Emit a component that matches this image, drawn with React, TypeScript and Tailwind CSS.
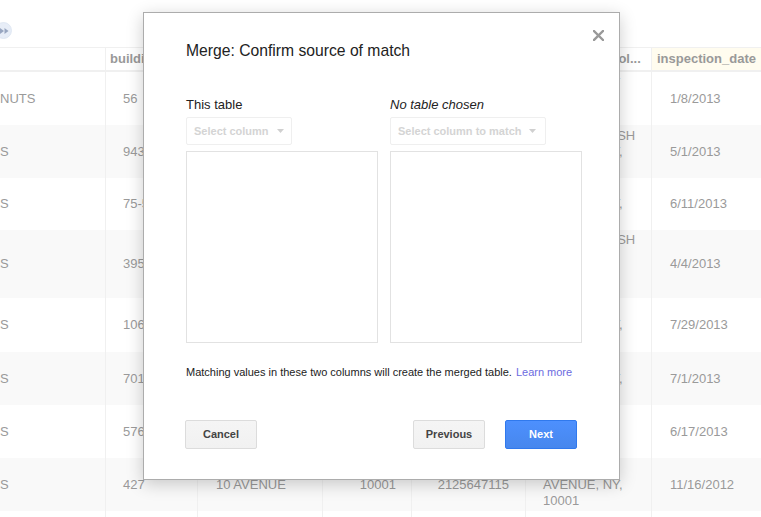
import React from 'react';

type Row = {
  h: string;
  bg: string;
  c0: string;
  c1: string;
  c2: string;
  c3: string;
  c4: string;
  c5: string[];
  d: string;
};

const rows: Row[] = [
  { h: 'h-[53px]', bg: 'bg-white', c0: 'NUTS', c1: '56', c2: '1 BROAD ST', c3: '10004', c4: '2125550101', c5: ['1 BROAD ST', 'STREET, NY,', '10004'], d: '1/8/2013' },
  { h: 'h-[53px]', bg: 'bg-[#f9f9f9]', c0: 'S', c1: '943', c2: 'FLATBUSH', c3: '11226', c4: '7185550102', c5: ['123 FLATBUSH', 'AVENUE, NY,', '11226'], d: '5/1/2013' },
  { h: 'h-[52px]', bg: 'bg-white', c0: 'S', c1: '75-55', c2: '31 AVENUE', c3: '11370', c4: '7185550103', c5: ['75-55 31ST', 'AVENUE, NY,', '11370'], d: '6/11/2013' },
  { h: 'h-[68px]', bg: 'bg-[#f9f9f9]', c0: 'S', c1: '395', c2: 'FLATBUSH', c3: '11238', c4: '7185550104', c5: ['123 FLATBUSH', 'AVE', 'STREET, NY,', '11238'], d: '4/4/2013' },
  { h: 'h-[54px]', bg: 'bg-white', c0: 'S', c1: '106', c2: 'W 32 ST', c3: '10001', c4: '2125550105', c5: ['106 W 32ND', 'AVENUE, NY,', '10001'], d: '7/29/2013' },
  { h: 'h-[53px]', bg: 'bg-[#f9f9f9]', c0: 'S', c1: '701', c2: '7 AVENUE', c3: '10036', c4: '2125550106', c5: ['701 7TH', 'AVENUE, NY,', '10036'], d: '7/1/2013' },
  { h: 'h-[53px]', bg: 'bg-white', c0: 'S', c1: '576', c2: '5 AVENUE', c3: '10036', c4: '2125550107', c5: ['576 5TH', 'STREET, NY,', '10036'], d: '6/17/2013' },
  { h: 'h-[53px]', bg: 'bg-[#f9f9f9]', c0: 'S', c1: '427', c2: '10 AVENUE', c3: '10001', c4: '2125647115', c5: ['427 10', 'AVENUE, NY,', '10001'], d: '11/16/2012' },
];

const grid = 'grid grid-cols-[105px_92px_125px_89px_114px_126px_1fr]';
const cellB = 'border-l border-[#f0f0f0]';

function Arrow() {
  return (
    <svg width="7" height="4" viewBox="0 0 7 4" className="shrink-0">
      <path d="M0 0 L7 0 L3.5 4 Z" fill="#d0d0d0" />
    </svg>
  );
}

export default function App() {
  return (
    <div className="relative w-[761px] h-[517px] overflow-hidden bg-white font-['Liberation_Sans',Arial,sans-serif]">
      {/* top bar */}
      <div className="h-[47px] pt-[22px]">
        <svg width="14" height="17" viewBox="0 0 14 17">
          <circle cx="3.5" cy="8.5" r="8" fill="#e7edf7" stroke="#dbe3f0" strokeWidth="0.8" />
          <path d="M0 6 L4 9 L0 12 Z" fill="#98a6c0" />
          <path d="M4.5 6 L8.5 9 L4.5 12 Z" fill="#98a6c0" />
        </svg>
      </div>

      {/* table header */}
      <div className={`${grid} border-t border-b-2 border-[#f0f0f0] h-[25px] text-[13px] font-bold text-[#999]`}>
        <div className="flex items-center pl-[4px]"></div>
        <div className={`${cellB} flex items-center pl-[4px] overflow-hidden whitespace-nowrap`}>building</div>
        <div className={`${cellB} flex items-center pl-[5px] overflow-hidden whitespace-nowrap`}>street</div>
        <div className={`${cellB} flex items-center pl-[5px] overflow-hidden whitespace-nowrap`}>zipcode</div>
        <div className={`${cellB} flex items-center pl-[5px] overflow-hidden whitespace-nowrap`}>phone</div>
        <div className={`${cellB} flex items-center pl-[5px] overflow-hidden whitespace-nowrap`}>address_geo_ol...</div>
        <div className={`${cellB} flex items-center pl-[5px] bg-[#fffcef] whitespace-nowrap`}>inspection_date</div>
      </div>

      {/* table rows */}
      {rows.map((r, i) => (
        <div key={i} className={`${grid} ${r.h} ${r.bg} text-[13px] leading-[16px] text-[#9a9a9a]`}>
          <div className="flex items-center overflow-hidden whitespace-nowrap">{r.c0}</div>
          <div className={`${cellB} flex items-center pl-[17px] overflow-hidden whitespace-nowrap`}>{r.c1}</div>
          <div className={`${cellB} flex items-center pl-[18px] overflow-hidden whitespace-nowrap`}>{r.c2}</div>
          <div className={`${cellB} flex items-center justify-end pr-[15px] overflow-hidden whitespace-nowrap`}>{r.c3}</div>
          <div className={`${cellB} flex items-center justify-end pr-[16px] overflow-hidden whitespace-nowrap`}>{r.c4}</div>
          <div className={`${cellB} flex flex-col justify-center pl-[17px] overflow-hidden whitespace-nowrap`}>
            {r.c5.map((l, j) => (
              <div key={j}>{l}</div>
            ))}
          </div>
          <div className={`${cellB} flex items-center pl-[18px] whitespace-nowrap`}>{r.d}</div>
        </div>
      ))}
      <div className={`${grid} h-[20px] bg-white`}>
        <div></div>
        <div className={cellB}></div>
        <div className={cellB}></div>
        <div className={cellB}></div>
        <div className={cellB}></div>
        <div className={cellB}></div>
        <div className={cellB}></div>
      </div>

      {/* dialog */}
      <div className="absolute left-[143px] top-[12px] w-[477px] h-[468px] bg-white border border-[#acacac] shadow-[0_4px_16px_rgba(0,0,0,0.2)] pl-[42px] pt-[28px]">
        <div className="absolute right-[15px] top-[17px] w-[11px] h-[11px]">
          <svg width="11" height="11" viewBox="0 0 11 11">
            <path d="M1 1 L10 10 M10 1 L1 10" stroke="#999" strokeWidth="2.4" strokeLinecap="square" />
          </svg>
        </div>

        <div className="text-[15.7px] leading-[20px] text-[#222]">Merge: Confirm source of match</div>

        <div className="mt-[36px] flex gap-[12px]">
          <div className="w-[192px]">
            <div className="text-[13px] leading-[16px] text-[#222]">This table</div>
            <div className="mt-[4px] h-[28px] w-[106px] flex items-center border border-[#efefef] rounded-[2px] pl-[7px]">
              <span className="text-[11px] font-bold text-[#d4d4d4] whitespace-nowrap">Select column</span>
              <span className="ml-[8px] flex"><Arrow /></span>
            </div>
            <div className="mt-[6px] h-[192px] border border-[#e2e2e2]" />
          </div>
          <div className="w-[192px]">
            <div className="text-[13px] leading-[16px] text-[#222] italic">No table chosen</div>
            <div className="mt-[4px] h-[28px] w-[156px] flex items-center border border-[#efefef] rounded-[2px] pl-[7px]">
              <span className="text-[11px] font-bold text-[#d4d4d4] whitespace-nowrap">Select column to match</span>
              <span className="ml-[8px] flex"><Arrow /></span>
            </div>
            <div className="mt-[6px] h-[192px] border border-[#e2e2e2]" />
          </div>
        </div>

        <div className="mt-[21px] text-[11px] leading-[16px] text-[#222] whitespace-nowrap">
          Matching values in these two columns will create the merged table.
          <span className="ml-[4px] text-[#6b6bdf]">Learn more</span>
        </div>

        <div className="mt-[40px] -ml-px w-[392px] flex">
          <div className="w-[72px] h-[29px] flex items-center justify-center rounded-[2px] border border-[#dcdcdc] bg-gradient-to-b from-[#f5f5f5] to-[#f1f1f1] text-[11px] font-bold text-[#444]">
            Cancel
          </div>
          <div className="ml-auto w-[72px] h-[29px] flex items-center justify-center rounded-[2px] border border-[#dcdcdc] bg-gradient-to-b from-[#f5f5f5] to-[#f1f1f1] text-[11px] font-bold text-[#444]">
            Previous
          </div>
          <div className="ml-[20px] w-[72px] h-[29px] flex items-center justify-center rounded-[2px] border border-[#3079ed] bg-gradient-to-b from-[#4d90fe] to-[#4787ed] text-[11px] font-bold text-white">
            Next
          </div>
        </div>
      </div>
    </div>
  );
}
